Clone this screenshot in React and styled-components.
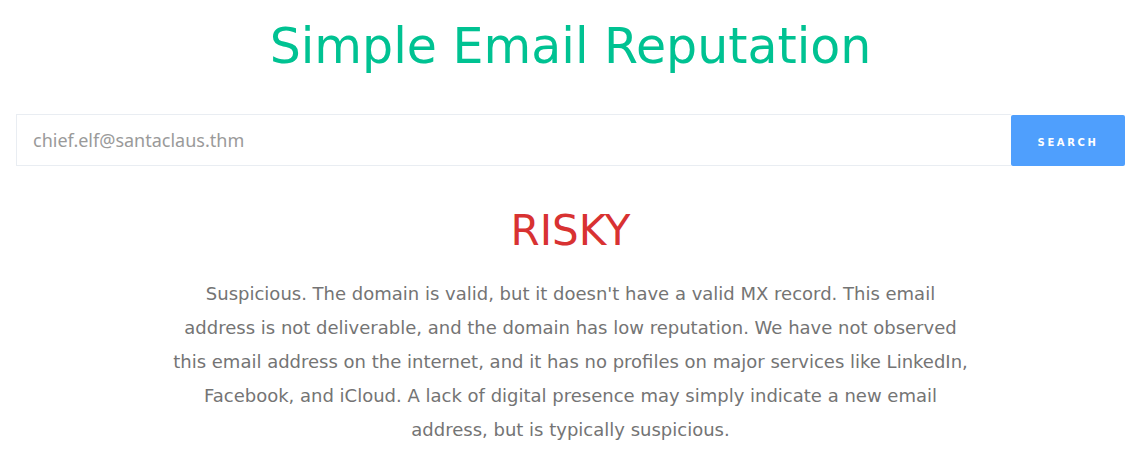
import styled, { createGlobalStyle } from "styled-components";

const GlobalStyle = createGlobalStyle`
  body {
    margin: 0;
    background: #ffffff;
    font-family: "DejaVu Sans", sans-serif;
  }
`;

const Page = styled.div`
  padding: 0 17px 0 16px;
  text-align: center;
`;

const Title = styled.h1`
  margin: 0;
  padding-top: 18px;
  font-size: 49px;
  font-weight: 400;
  line-height: 58px;
  color: #00c292;
`;

const SearchBar = styled.form`
  display: flex;
  margin-top: 38px;
  height: 52px;
`;

const EmailInput = styled.input`
  flex: 1;
  min-width: 0;
  box-sizing: border-box;
  border: 1px solid #e9edf2;
  border-right: none;
  padding: 0 16px;
  font-family: "Noto Sans", sans-serif;
  font-size: 18px;
  color: #67757c;
  outline: none;

  &::placeholder {
    color: #9a9a9a;
  }
`;

const SearchButton = styled.button`
  width: 114px;
  margin-top: 1px;
  padding: 3px 0 0;
  border: none;
  border-radius: 2px;
  background: #4f9ffd;
  color: #ffffff;
  font-family: "DejaVu Sans", sans-serif;
  font-size: 10px;
  font-weight: 700;
  letter-spacing: 2.6px;
  text-transform: uppercase;
`;

const Verdict = styled.h2`
  margin: 40px 0 0;
  font-size: 42px;
  font-weight: 400;
  line-height: 50px;
  color: ${(p) => p.$color};
`;

const Summary = styled.p`
  max-width: 800px;
  margin: 21px auto 0;
  font-size: 18px;
  line-height: 34px;
  color: #747474;
`;

export default function App() {
  return (
    <>
      <GlobalStyle />
      <Page>
        <Title>Simple Email Reputation</Title>
        <SearchBar onSubmit={(e) => e.preventDefault()}>
          <EmailInput placeholder="chief.elf@santaclaus.thm" />
          <SearchButton type="submit">Search</SearchButton>
        </SearchBar>
        <Verdict $color="#d83232">RISKY</Verdict>
        <Summary>
          Suspicious. The domain is valid, but it doesn't have a valid MX
          record. This email address is not deliverable, and the domain has low
          reputation. We have not observed this email address on the internet,
          and it has no profiles on major services like LinkedIn, Facebook, and
          iCloud. A lack of digital presence may simply indicate a new email
          address, but is typically suspicious.
        </Summary>
      </Page>
    </>
  );
}
